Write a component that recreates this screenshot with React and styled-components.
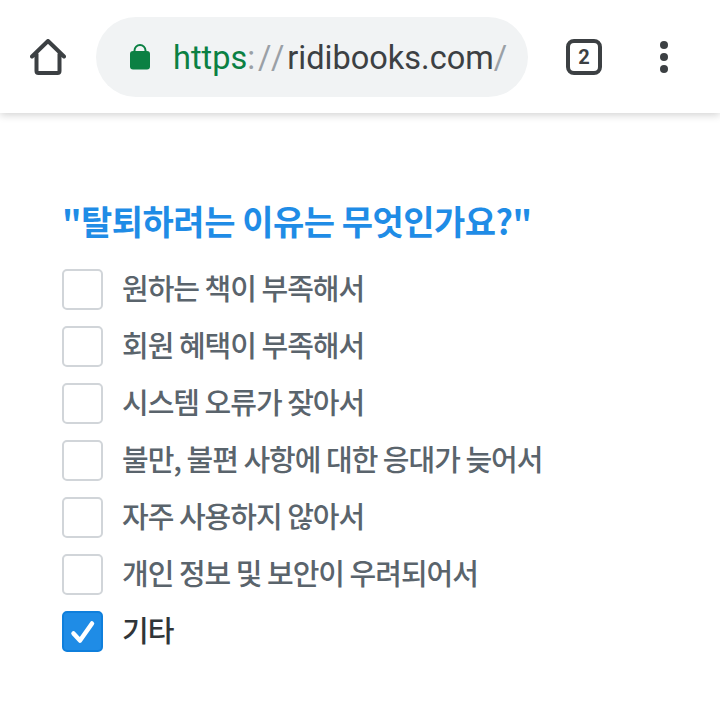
import React from 'react';
import styled, { createGlobalStyle } from 'styled-components';

const reasons = [
  { label: '원하는 책이 부족해서' },
  { label: '회원 혜택이 부족해서' },
  { label: '시스템 오류가 잦아서' },
  { label: '불만, 불편 사항에 대한 응대가 늦어서' },
  { label: '자주 사용하지 않아서' },
  { label: '개인 정보 및 보안이 우려되어서' },
  { label: '기타', checked: true },
];

const App = () => (
  <>
    <GlobalStyle />
    <Toolbar>
      <HomeButton>
        <svg width="36" height="36" viewBox="0 0 36 36" fill="none">
          <path
            d="M2 17.500 18 2l16 15.500M6.500 15v17a2 2 0 0 0 2 2h19a2 2 0 0 0 2-2V15"
            stroke="#3c4043"
            strokeWidth="4"
            strokeLinecap="round"
            strokeLinejoin="round"
          />
        </svg>
      </HomeButton>
      <UrlPill>
        <svg width="20" height="27" viewBox="0 0 20 27">
          <path d="M4.5 10V7.500a5.500 5.500 0 0 1 11 0V10" fill="none" stroke="#0b8043" strokeWidth="2" />
          <rect x="0" y="8" width="20" height="18.500" rx="3" fill="#0b8043" />
        </svg>
        <UrlText>
          <Scheme>https</Scheme>
          <Slashes>://</Slashes>
          ridibooks.com
          <Slashes>/</Slashes>
        </UrlText>
      </UrlPill>
      <TabCount>2</TabCount>
      <MenuDots>
        <Dot />
        <Dot />
        <Dot />
      </MenuDots>
    </Toolbar>
    <Content>
      <Question>"탈퇴하려는 이유는 무엇인가요?"</Question>
      <ReasonList>
        {reasons.map((reason) => (
          <Reason key={reason.label}>
            <CheckBox $checked={reason.checked}>
              {reason.checked && (
                <svg width="26" height="24" viewBox="0 0 26 24" fill="none">
                  <path
                    d="M3.500 13.500l6.500 7L22 3.500"
                    stroke="#fff"
                    strokeWidth="4.500"
                    strokeLinecap="round"
                    strokeLinejoin="round"
                  />
                </svg>
              )}
            </CheckBox>
            <ReasonLabel $checked={reason.checked}>{reason.label}</ReasonLabel>
          </Reason>
        ))}
      </ReasonList>
    </Content>
  </>
);

export default App;

const GlobalStyle = createGlobalStyle`
  html, body {
    margin: 0;
    background: #fff;
  }
  body {
    width: 720px;
    height: 720px;
    overflow: hidden;
    font-family: "Noto Sans CJK KR", "Noto Sans", sans-serif;
  }
`;

const Toolbar = styled.header`
  display: flex;
  align-items: center;
  height: 113px;
  box-sizing: border-box;
  padding: 0 0 0 30px;
  background: #fff;
  box-shadow: 0 2px 8px rgba(0, 0, 0, 0.18);
`;

const HomeButton = styled.div`
  display: flex;
  width: 36px;
  height: 36px;
  margin-right: 30px;
`;

const UrlPill = styled.div`
  display: flex;
  align-items: center;
  width: 432px;
  height: 80px;
  box-sizing: border-box;
  padding-left: 34px;
  border-radius: 40px;
  background: #f1f3f4;
`;

const UrlText = styled.span`
  margin-left: 23px;
  padding-top: 2px;
  font-family: Roboto, sans-serif;
  font-size: 32.5px;
  color: #3c4043;
  white-space: nowrap;
`;

const Scheme = styled.span`
  color: #0b8043;
`;

const Slashes = styled.span`
  letter-spacing: 3px;
  color: #9aa0a6;
`;

const TabCount = styled.div`
  display: flex;
  align-items: center;
  justify-content: center;
  width: 36px;
  height: 36px;
  box-sizing: border-box;
  margin-left: 38px;
  border: 4px solid #3c4043;
  border-radius: 8px;
  font-family: Roboto, sans-serif;
  font-size: 20px;
  font-weight: 700;
  color: #3c4043;
`;

const MenuDots = styled.div`
  display: flex;
  flex-direction: column;
  gap: 4px;
  margin-left: 58px;
`;

const Dot = styled.span`
  width: 8px;
  height: 8px;
  border-radius: 50%;
  background: #3c4043;
`;

const Content = styled.main`
  padding: 84px 62px 0;
`;

const Question = styled.h2`
  margin: 0 0 24px;
  font-size: 34px;
  line-height: 48px;
  font-weight: 700;
  letter-spacing: -0.5px;
  color: #1f8ce6;
  white-space: nowrap;
`;

const ReasonList = styled.div`
  display: flex;
  flex-direction: column;
  gap: 16px;
`;

const Reason = styled.label`
  display: flex;
  align-items: center;
  height: 41px;
`;

const CheckBox = styled.span`
  display: flex;
  align-items: center;
  justify-content: center;
  width: 41px;
  height: 41px;
  box-sizing: border-box;
  margin-right: 19px;
  border: 2px solid ${(p) => (p.$checked ? '#0f7fdc' : '#d1d5d9')};
  border-radius: 5px;
  background: ${(p) => (p.$checked ? '#1f8ce6' : '#fff')};
`;

const ReasonLabel = styled.span`
  padding-bottom: 6px;
  font-size: 29px;
  font-weight: 500;
  letter-spacing: -1px;
  color: ${(p) => (p.$checked ? '#303538' : '#5a646c')};
  white-space: nowrap;
`;
